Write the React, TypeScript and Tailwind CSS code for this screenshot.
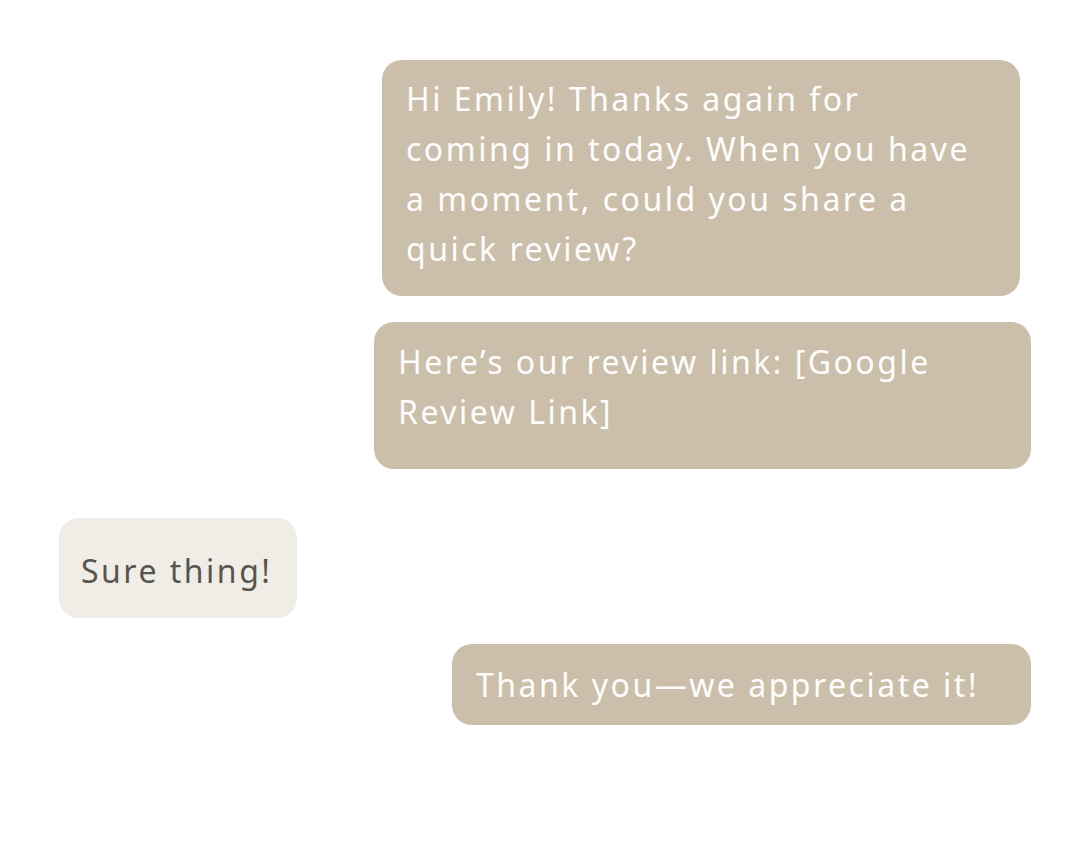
import React from "react";

export default function App() {
  return (
    <div
      className="w-[1080px] h-[863px] bg-white relative"
      style={{ fontFamily: '"Noto Sans", "Open Sans", sans-serif' }}
    >
      <div className="flex flex-col pt-[60px] tracking-[2.5px]">
        <div className="flex justify-end pr-[60px]">
          <div className="w-[638px] h-[236px] rounded-[20px] bg-[#cbbfab] pl-[24px] pr-[10px] pt-[14px] text-[32px] leading-[50px] text-[#fefdfb] whitespace-nowrap">
            Hi Emily! Thanks again for
            <br />
            coming in today. When you have
            <br />
            a moment, could you share a
            <br />
            quick review?
          </div>
        </div>
        <div className="flex justify-end pr-[49px] mt-[26px]">
          <div className="w-[657px] h-[147px] rounded-[20px] bg-[#cbbfab] pl-[24px] pr-[10px] pt-[15px] text-[32px] leading-[50px] text-[#fefdfb] whitespace-nowrap">
            Here’s our review link: [Google
            <br />
            Review Link]
          </div>
        </div>
        <div className="flex justify-start pl-[59px] mt-[49px]">
          <div className="w-[238px] h-[100px] rounded-[20px] bg-[#f0ede7] pl-[22px] pt-[28px] text-[32px] leading-[50px] text-[#57554f] whitespace-nowrap">
            Sure thing!
          </div>
        </div>
        <div className="flex justify-end pr-[49px] mt-[26px]">
          <div className="w-[579px] h-[81px] rounded-[20px] bg-[#cbbfab] pl-[24px] flex items-center text-[32px] leading-[50px] text-[#fefdfb] whitespace-nowrap">
            Thank you—we appreciate it!
          </div>
        </div>
      </div>
    </div>
  );
}
